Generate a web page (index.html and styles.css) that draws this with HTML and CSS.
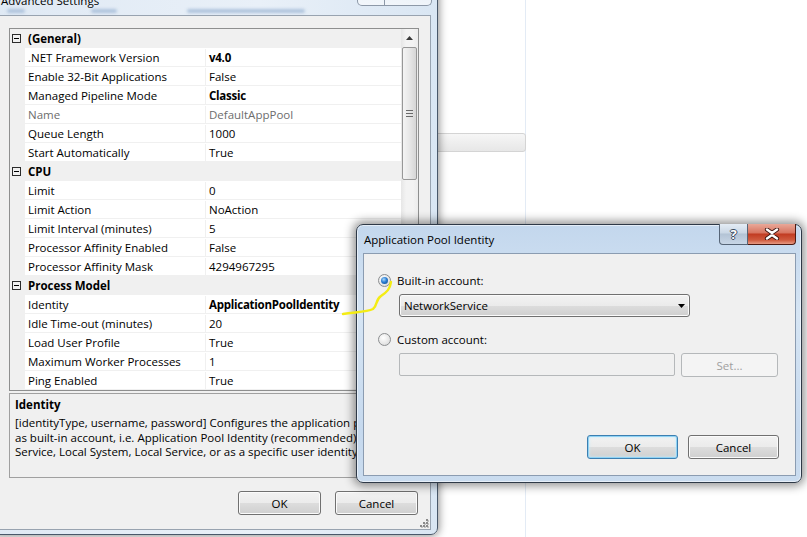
FILE: index.html
```html
<!DOCTYPE html>
<html lang="en">
<head>
  <meta charset="UTF-8">
  <title>Application Pool Identity</title>
  <link rel="stylesheet" href="styles.css">
</head>
<body>
<div class="desk">
  <div class="page-rule"></div>
  <div class="page-bar"></div>

  <!-- Advanced Settings window (behind) -->
  <div class="adv">
    <div class="adv-title">Advanced Settings</div>
    <div class="glass-blur">
      <span class="blob blob-a"></span><span class="blob blob-b"></span><span class="blob blob-c"></span>
    </div>
    <div class="adv-caps"><span class="cap-help"></span><span class="cap-close"></span></div>

    <div class="adv-body">
      <div class="grid">
        <div class="grid-list">
          <div class="row cat"><svg class="tog" width="9" height="9"><rect x="0.5" y="0.5" width="8" height="8" fill="none" stroke="#2b2b2b"/><path d="M2 4.5h5" stroke="#000"/></svg><span>(General)</span></div>
          <div class="row"><span class="gut"></span><span class="name">.NET Framework Version</span><span class="val strong">v4.0</span></div>
          <div class="row"><span class="gut"></span><span class="name">Enable 32-Bit Applications</span><span class="val">False</span></div>
          <div class="row"><span class="gut"></span><span class="name">Managed Pipeline Mode</span><span class="val strong">Classic</span></div>
          <div class="row dim"><span class="gut"></span><span class="name">Name</span><span class="val">DefaultAppPool</span></div>
          <div class="row"><span class="gut"></span><span class="name">Queue Length</span><span class="val">1000</span></div>
          <div class="row"><span class="gut"></span><span class="name">Start Automatically</span><span class="val">True</span></div>
          <div class="row cat"><svg class="tog" width="9" height="9"><rect x="0.5" y="0.5" width="8" height="8" fill="none" stroke="#2b2b2b"/><path d="M2 4.5h5" stroke="#000"/></svg><span>CPU</span></div>
          <div class="row"><span class="gut"></span><span class="name">Limit</span><span class="val">0</span></div>
          <div class="row"><span class="gut"></span><span class="name">Limit Action</span><span class="val">NoAction</span></div>
          <div class="row"><span class="gut"></span><span class="name">Limit Interval (minutes)</span><span class="val">5</span></div>
          <div class="row"><span class="gut"></span><span class="name">Processor Affinity Enabled</span><span class="val">False</span></div>
          <div class="row"><span class="gut"></span><span class="name">Processor Affinity Mask</span><span class="val">4294967295</span></div>
          <div class="row cat"><svg class="tog" width="9" height="9"><rect x="0.5" y="0.5" width="8" height="8" fill="none" stroke="#2b2b2b"/><path d="M2 4.5h5" stroke="#000"/></svg><span>Process Model</span></div>
          <div class="row"><span class="gut"></span><span class="name">Identity</span><span class="val strong">ApplicationPoolIdentity</span></div>
          <div class="row"><span class="gut"></span><span class="name">Idle Time-out (minutes)</span><span class="val">20</span></div>
          <div class="row"><span class="gut"></span><span class="name">Load User Profile</span><span class="val">True</span></div>
          <div class="row"><span class="gut"></span><span class="name">Maximum Worker Processes</span><span class="val">1</span></div>
          <div class="row"><span class="gut"></span><span class="name">Ping Enabled</span><span class="val">True</span></div>
        </div>
        <div class="sb">
          <div class="sb-up"><svg width="7" height="4"><path d="M0 4L3.5 0L7 4Z" fill="#3a3a3a"/></svg></div>
          <div class="sb-thumb"><svg width="7" height="7"><path d="M0 .5h7M0 3.5h7M0 6.5h7" stroke="#6a6a6a"/></svg></div>
        </div>
      </div>

      <div class="desc">
        <div class="desc-title">Identity</div>
        <div class="desc-text">[identityType, username, password] Configures the application pool to run<br>as built-in account, i.e. Application Pool Identity (recommended), Network<br>Service, Local System, Local Service, or as a specific user identity.</div>
      </div>

      <div class="adv-actions">
        <button class="btn adv-btn">OK</button>
        <button class="btn adv-btn">Cancel</button>
      </div>

      <svg class="grip" width="9" height="9">
        <g fill="#c2c2c2"><rect x="7" y="1" width="2" height="2"/><rect x="4" y="4" width="2" height="2"/><rect x="7" y="4" width="2" height="2"/><rect x="1" y="7" width="2" height="2"/><rect x="4" y="7" width="2" height="2"/><rect x="7" y="7" width="2" height="2"/></g>
        <g fill="#8a8a8a"><rect x="6" y="0" width="2" height="2"/><rect x="3" y="3" width="2" height="2"/><rect x="6" y="3" width="2" height="2"/><rect x="0" y="6" width="2" height="2"/><rect x="3" y="6" width="2" height="2"/><rect x="6" y="6" width="2" height="2"/></g>
      </svg>
    </div>
  </div>

  <!-- Application Pool Identity dialog -->
  <div class="dlg">
    <div class="dlg-title">Application Pool Identity</div>
    <div class="dlg-caps">
      <span class="dcap-help">?</span>
      <span class="dcap-close"><svg width="16" height="12" viewBox="0 0 16 12"><path d="M3 1.5L8 5L13 1.5M3 10.5L8 7L13 10.5" fill="none" stroke="#3b1410" stroke-width="4.2" stroke-linecap="round"/><path d="M3 1.5L8 5L13 1.5M3 10.5L8 7L13 10.5" fill="none" stroke="#fff" stroke-width="2.4" stroke-linecap="round"/></svg></span>
    </div>
    <div class="dlg-body">
      <label class="opt"><span class="radio on"></span><span>Built-in account:</span></label>
      <div class="combo"><span>NetworkService</span><svg width="7" height="4"><path d="M0 0H7L3.5 4Z" fill="#000"/></svg></div>
      <label class="opt opt-custom"><span class="radio"></span><span>Custom account:</span></label>
      <div class="custom-row">
        <div class="textbox"></div>
        <button class="btn btn-off set-btn">Set...</button>
      </div>
      <div class="dlg-actions">
        <button class="btn dlg-btn focus">OK</button>
        <button class="btn dlg-btn">Cancel</button>
      </div>
    </div>
  </div>

  <svg class="scribble" width="807" height="537">
    <path d="M343 314 C356 312 367 312 373 309 C378 305 375 300 381 296 C387 292 390 289 391 282" fill="none" stroke="#f4ec14" stroke-width="2.4" stroke-linecap="round"/>
  </svg>
</div>
</body>
</html>
```

FILE: styles.css
```css
* {
  box-sizing: border-box;
}
html, body {
  margin: 0;
  padding: 0;
}
body {
  font-family: "Segoe UI", "Open Sans", sans-serif;
  font-size: 11.5px;
  color: #000;
  background: #fff;
}
.desk {
  position: relative;
  width: 807px;
  height: 537px;
  overflow: hidden;
  background: #fff;
}
.page-rule {
  position: absolute;
  left: 525px;
  top: 0;
  width: 1px;
  height: 537px;
  background: #e3ebf5;
}
.page-bar {
  position: absolute;
  left: 420px;
  top: 133px;
  width: 106px;
  height: 19px;
  border: 1px solid #d4d4d4;
  border-radius: 0 3px 3px 0;
  background: linear-gradient(#f6f6f6, #e7e7e7);
}

/* background window */
.adv {
  position: absolute;
  left: -8px;
  top: -30px;
  width: 446px;
  height: 565px;
  display: flex;
  flex-direction: column;
  border: 1px solid #49586a;
  border-radius: 7px;
  background: linear-gradient(90deg, #dfe9f4, #e9f0f8 60%, #d9e6f3);
  box-shadow: 0 0 9px 1px rgba(0, 0, 0, 0.45);
}
.adv-title {
  height: 44px;
  padding: 22px 0 0 8px;
  line-height: 15px;
}
.glass-blur {
  position: absolute;
  left: 14px;
  top: 38px;
  display: flex;
  filter: blur(1.4px);
}
.blob {
  height: 4px;
  border-radius: 2px;
  background: #aec3dc;
}
.blob-a {
  width: 18px;
}
.blob-b {
  width: 26px;
  margin-left: 66px;
}
.blob-c {
  width: 118px;
  margin-left: 70px;
}
.adv-caps {
  position: absolute;
  top: -1px;
  right: 5px;
  display: flex;
  height: 36px;
}
.cap-help, .cap-close {
  border: 1px solid #8d99a8;
  border-top: none;
  background: linear-gradient(rgba(255,255,255,0.2), rgba(255,255,255,0.6));
}
.cap-help {
  width: 28px;
  border-radius: 0 0 0 5px;
}
.cap-close {
  width: 47px;
  border-left: none;
  border-radius: 0 0 5px 0;
}
.adv-body {
  position: relative;
  flex: 1;
  display: flex;
  flex-direction: column;
  margin: 0 6px 4px 6px;
  padding: 12px 11px 0 9px;
  background: #f0f0f0;
  border: 1px solid #98a3b0;
}

/* property grid */
.grid {
  display: flex;
  height: 363px;
  border: 1px solid #8e8f8f;
  background: #fff;
}
.grid-list {
  flex: 1;
}
.row {
  display: flex;
  height: 19px;
  padding-top: 1px;
  line-height: 18px;
  border-bottom: 1px solid #f0f0f0;
  white-space: nowrap;
}
.gut {
  width: 15px;
  margin-top: -1px;
  background: #f0f0f0;
}
.name {
  width: 181px;
  padding-left: 3px;
  border-right: 1px solid #f0f0f0;
}
.val {
  flex: 1;
  padding-left: 3px;
}
.strong {
  font-weight: bold;
  letter-spacing: -0.25px;
}
.dim {
  color: #6d6d6d;
}
.cat {
  align-items: center;
  padding-left: 2px;
  background: #f0f0f0;
  font-weight: bold;
}
.tog {
  margin-right: 7px;
  flex: none;
}
.sb {
  width: 17px;
  display: flex;
  flex-direction: column;
  background: linear-gradient(90deg, #e6e6e6, #f3f3f3 30%, #f3f3f3 70%, #ececec);
}
.sb-up {
  height: 18px;
  display: flex;
  align-items: center;
  justify-content: center;
}
.sb-thumb {
  height: 133px;
  margin: 0 1px;
  display: flex;
  align-items: center;
  justify-content: center;
  border: 1px solid #979797;
  border-radius: 2px;
  background: linear-gradient(90deg, #f4f4f4, #e7e7e7 50%, #d6d6d6);
}

/* description pane */
.desc {
  height: 85px;
  margin-top: 2px;
  padding: 3px 5px 0;
  border: 1px solid #a0a0a0;
  white-space: nowrap;
  overflow: hidden;
}
.desc-title {
  font-weight: bold;
  line-height: 15px;
  margin-bottom: 4px;
}
.desc-text {
  line-height: 14.5px;
}
.adv-actions {
  display: flex;
  justify-content: flex-end;
  gap: 14px;
  margin-top: 13px;
  padding-right: 1px;
}
.grip {
  position: absolute;
  right: 1px;
  bottom: 1px;
}

/* buttons */
.btn {
  font: inherit;
  color: #000;
  height: 24px;
  padding: 0;
  border: 1px solid #707070;
  border-radius: 3px;
  background: linear-gradient(#f2f2f2, #ebebeb 50%, #dddddd 50%, #cfcfcf);
  box-shadow: inset 0 0 0 1px #fbfbfb;
}
.adv-btn {
  width: 83px;
}
.btn.focus {
  border-color: #3c7fb1;
  box-shadow: inset 0 0 0 1px #8fd3f5, inset 0 0 3px 1px #c6ecfb;
}
.btn-off {
  color: #a0a0a0;
  border-color: #b5b8ba;
  background: #f4f4f4;
  box-shadow: none;
}

/* dialog */
.dlg {
  position: absolute;
  left: 356px;
  top: 224px;
  width: 446px;
  height: 259px;
  display: flex;
  flex-direction: column;
  border: 1px solid #2e3947;
  border-radius: 7px;
  background: linear-gradient(#c3d7ed, #d6e5f4 35%, #c6d9ee 80%, #cadcef);
  box-shadow: 0 0 10px 3px rgba(0, 0, 0, 0.42), inset 0 0 0 1px rgba(255, 255, 255, 0.55);
}
.dlg-title {
  height: 28px;
  padding: 7px 0 0 7px;
  line-height: 16px;
}
.dlg-caps {
  position: absolute;
  top: -1px;
  right: 5px;
  display: flex;
  height: 21px;
}
.dcap-help {
  width: 29px;
  display: flex;
  align-items: center;
  justify-content: center;
  border: 1px solid #566577;
  border-top: none;
  border-radius: 0 0 0 4px;
  background: linear-gradient(#e4ecf5, #cad7e5 45%, #b3c3d5 50%, #c8d6e6);
  font-weight: bold;
  font-size: 13px;
  color: #fff;
  text-shadow: 1px 0 #3c4b5e, -1px 0 #3c4b5e, 0 1px #3c4b5e, 0 -1px #3c4b5e;
}
.dcap-close {
  width: 48px;
  display: flex;
  align-items: center;
  justify-content: center;
  border: 1px solid #4d1a12;
  border-top: none;
  border-left: none;
  border-radius: 0 0 4px 0;
  background: linear-gradient(#e9a899, #d7745f 45%, #c13b21 50%, #cf5a3e 80%, #e79a84);
}
.dlg-body {
  flex: 1;
  display: flex;
  flex-direction: column;
  margin: 0 5px 6px 6px;
  padding: 20px 16px 16px 14px;
  background: #f0f0f0;
  border: 1px solid #8b9cb1;
}
.opt {
  display: flex;
  align-items: center;
  gap: 6px;
  height: 13px;
  line-height: 13px;
}
.opt > span:last-child {
  margin-top: -1px;
}
.opt-custom {
  margin-top: 16px;
}
.radio {
  width: 13px;
  height: 13px;
  border-radius: 50%;
  border: 1px solid #8c8e90;
  background: radial-gradient(circle at 40% 35%, #ffffff, #e6e6e6 60%, #cfd1d3);
  display: flex;
  align-items: center;
  justify-content: center;
}
.radio.on::after {
  content: "";
  width: 7px;
  height: 7px;
  border-radius: 50%;
  background: radial-gradient(circle at 40% 35%, #a9d9fa, #2a7dd4 45%, #0d4584);
}
.combo {
  width: 291px;
  height: 23px;
  margin: 7px 0 0 21px;
  padding: 0 4px 0 4px;
  display: flex;
  align-items: center;
  justify-content: space-between;
  border: 1px solid #707070;
  border-radius: 3px;
  background: linear-gradient(#f2f2f2, #ebebeb 50%, #dddddd 50%, #cfcfcf);
  box-shadow: inset 0 0 0 1px #fbfbfb;
}
.custom-row {
  display: flex;
  align-items: flex-start;
  gap: 6px;
  margin: 7px 0 0 21px;
}
.textbox {
  width: 276px;
  height: 23px;
  border: 1px solid #b5b8ba;
  border-radius: 2px;
  background: #f0f0f0;
}
.set-btn {
  width: 97px;
}
.dlg-actions {
  display: flex;
  justify-content: flex-end;
  gap: 10px;
  margin-top: auto;
}
.dlg-btn {
  width: 91px;
}
.scribble {
  position: absolute;
  left: 0;
  top: 0;
  pointer-events: none;
}
```
